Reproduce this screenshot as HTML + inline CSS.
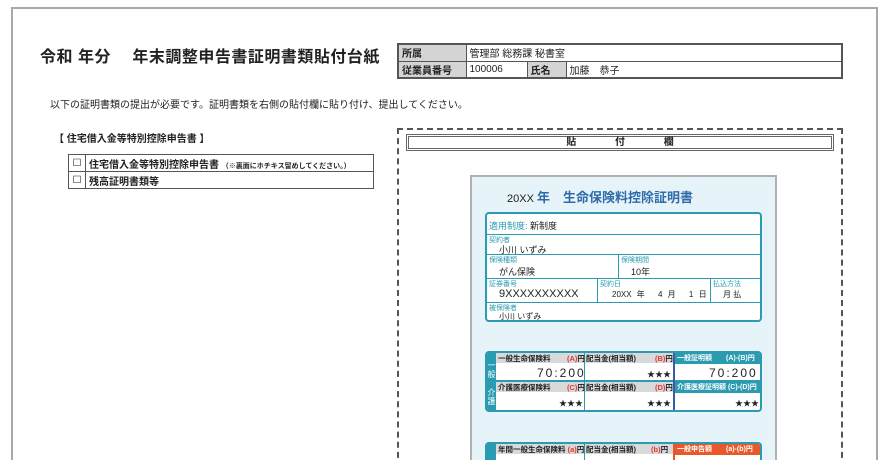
<!DOCTYPE html>
<html style="width:882px;height:474px;overflow:hidden"><head><meta charset="utf-8"><style>
*{margin:0;padding:0;box-sizing:border-box}
body{width:882px;height:474px;background:#fff;position:relative;overflow:hidden;font-family:"Liberation Sans","Noto Sans CJK JP",sans-serif;color:#222}
.a{position:absolute}
.b{font-weight:bold}
table{border-collapse:collapse;position:absolute;table-layout:fixed}
td{border:1px solid #555;font-size:10px;padding:0 3px;height:17px;white-space:nowrap;overflow:hidden}
.g{background:#d4d4d4}
.t{color:#2a9bb0}
.hd{background:#d8d9da;font-size:9px;font-weight:bold;height:10px;position:absolute}
.r{color:#e23b2e}
</style></head><body>
<div class="a" style="left:11px;top:7px;width:867px;height:453px;border:2px solid #a8a8a8;border-bottom:none"></div>
<div class="a b" style="left:40px;top:43px;font-size:16px;letter-spacing:0.5px">令和 年分　 年末調整申告書証明書類貼付台紙</div>
<table style="left:397px;top:43px;width:446px;border:2px solid #555">
<col style="width:68px"><col style="width:61px"><col style="width:39px"><col>
<tr><td class="g b">所属</td><td colspan="3">管理部 総務課 秘書室</td></tr>
<tr><td class="g b">従業員番号</td><td>100006</td><td class="g b">氏名</td><td>加藤　恭子</td></tr>
</table>
<div class="a" style="left:50px;top:96px;font-size:10px">以下の証明書類の提出が必要です。証明書類を右側の貼付欄に貼り付け、提出してください。</div>
<div class="a b" style="left:54px;top:130px;font-size:10px">【 住宅借入金等特別控除申告書 】</div>
<table style="left:68px;top:154px;width:306px">
<col style="width:17px"><col>
<tr><td style="text-align:center;padding:0">☐</td><td class="b">住宅借入金等特別控除申告書 <span style="font-size:7px">（※裏面にホチキス留めしてください。）</span></td></tr>
<tr><td style="text-align:center;padding:0">☐</td><td class="b">残高証明書類等</td></tr>
</table>
<div class="a" style="left:397px;top:128px;width:446px;height:340px;border:2px dashed #555"></div>
<div class="a b" style="left:406px;top:134px;width:428px;height:17px;border:3px double #666;font-size:10px;text-align:center;line-height:11px;word-spacing:36px">貼 付 欄</div>
<div class="a" style="left:470px;top:175px;width:307px;height:295px;background:#e6f4f9;border:2px solid #b0b0b0"></div>
<div class="a" style="left:507px;top:187px;font-size:11px">20XX <span class="b" style="color:#2e6aa8;font-size:13px">年　生命保険料控除証明書</span></div>
<div class="a" style="left:485px;top:212px;width:277px;height:110px;background:#fff;border:2px solid #2a9bb0;border-radius:4px;font-size:9px">
 <div class="a" style="left:0;top:20px;width:273px;border-top:1px solid #2a9bb0"></div>
 <div class="a" style="left:0;top:40px;width:273px;border-top:1px solid #2a9bb0"></div>
 <div class="a" style="left:0;top:64px;width:273px;border-top:1px solid #2a9bb0"></div>
 <div class="a" style="left:0;top:88px;width:273px;border-top:1px solid #2a9bb0"></div>
 <div class="a" style="left:131px;top:40px;height:24px;border-left:1px solid #2a9bb0"></div>
 <div class="a" style="left:110px;top:64px;height:24px;border-left:1px solid #2a9bb0"></div>
 <div class="a" style="left:223px;top:64px;height:24px;border-left:1px solid #2a9bb0"></div>
 <div class="a" style="left:2px;top:5px"><span class="t">適用制度:</span> 新制度</div>
 <div class="a t" style="left:2px;top:21px;font-size:7px">契約者</div><div class="a" style="left:12px;top:29px">小川 いずみ</div>
 <div class="a t" style="left:2px;top:41px;font-size:7px">保険種類</div><div class="a" style="left:12px;top:51px">がん保険</div>
 <div class="a t" style="left:134px;top:41px;font-size:7px">保険期間</div><div class="a" style="left:144px;top:51px">10年</div>
 <div class="a t" style="left:2px;top:65px;font-size:7px">証券番号</div><div class="a" style="left:12px;top:74px;font-size:11px">9XXXXXXXXXX</div>
 <div class="a t" style="left:113px;top:65px;font-size:7px">契約日</div><div class="a" style="left:125px;top:75px;font-size:8px;word-spacing:3px">20XX 年 　4 月 　1 日</div>
 <div class="a t" style="left:226px;top:65px;font-size:7px">払込方法</div><div class="a" style="left:236px;top:75px;font-size:8px">月 払</div>
 <div class="a t" style="left:2px;top:89px;font-size:7px">被保険者</div><div class="a" style="left:12px;top:97px;font-size:8px">小川 いずみ</div>
</div>
<div class="a" style="left:485px;top:351px;width:277px;height:61px;background:#fff;border:2px solid #2a9bb0;border-radius:4px;overflow:hidden;font-size:8px">
 <div class="a" style="left:0;top:0;width:9px;height:61px;background:#2a9bb0;color:#fff;font-size:8px;line-height:9px;text-align:center;padding-top:8px">一<br>般<br><br>介<br>護</div>
 <div class="hd" style="left:9px;top:0;width:177px"></div>
 <div class="hd" style="left:9px;top:29px;width:177px"></div>
 <div class="a" style="left:9px;top:27px;width:264px;border-top:2px solid #2a9bb0"></div>
 <div class="a" style="left:97px;top:0;height:61px;border-left:1px solid #2a9bb0"></div>
 <div class="a" style="left:186px;top:-2px;width:91px;height:61px;border:2px solid #3a5ea6;border-radius:0 4px 4px 0"></div>
 <div class="a" style="left:188px;top:0;width:85px;height:11px;background:#2a9bb0"></div>
 <div class="a" style="left:188px;top:29px;width:85px;height:11px;background:#2a9bb0"></div>
 <div class="a b" style="left:11px;top:0;font-size:7.5px">一般生命保険料</div><div class="a b" style="left:80px;top:0;font-size:7.5px"><span class="r">(A)</span>円</div>
 <div class="a b" style="left:99px;top:0;font-size:7.5px">配当金(相当額)</div><div class="a b" style="left:168px;top:0;font-size:7.5px"><span class="r">(B)</span>円</div>
 <div class="a b" style="left:190px;top:0;font-size:7px;color:#fff;white-space:nowrap">一般証明額　　(A)-(B)円</div>
 <div class="a b" style="left:11px;top:29px;font-size:7.5px">介護医療保険料</div><div class="a b" style="left:80px;top:29px;font-size:7.5px"><span class="r">(C)</span>円</div>
 <div class="a b" style="left:99px;top:29px;font-size:7.5px">配当金(相当額)</div><div class="a b" style="left:168px;top:29px;font-size:7.5px"><span class="r">(D)</span>円</div>
 <div class="a b" style="left:190px;top:29px;font-size:7px;color:#fff;white-space:nowrap">介護医療証明額 (C)-(D)円</div>
 <div class="a" style="left:50px;top:13px;font-size:12px;letter-spacing:2px">70:200</div>
 <div class="a" style="left:222px;top:13px;font-size:12px;letter-spacing:2px">70:200</div>
 <div class="a" style="left:160px;top:16px;font-size:8px">★★★</div>
 <div class="a" style="left:72px;top:45px;font-size:8px">★★★</div>
 <div class="a" style="left:160px;top:45px;font-size:8px">★★★</div>
 <div class="a" style="left:248px;top:45px;font-size:8px">★★★</div>
</div>
<div class="a" style="left:485px;top:442px;width:277px;height:26px;background:#fff;border:2px solid #2a9bb0;border-bottom:none;border-radius:4px 4px 0 0;overflow:hidden;font-size:7.5px">
 <div class="a" style="left:0;top:0;width:9px;height:30px;background:#2a9bb0"></div>
 <div class="hd" style="left:9px;top:0;width:177px"></div>
 <div class="a" style="left:97px;top:0;height:30px;border-left:1px solid #2a9bb0"></div>
 <div class="a" style="left:186px;top:-2px;width:91px;height:34px;border:2px solid #e8582a"></div>
 <div class="a" style="left:188px;top:0;width:85px;height:11px;background:#e8582a"></div>
 <div class="a b" style="left:11px;top:0;white-space:nowrap">年間一般生命保険料 <span class="r">(a)</span>円</div>
 <div class="a b" style="left:99px;top:0;white-space:nowrap">配当金(相当額)　　<span class="r">(b)</span>円</div>
 <div class="a b" style="left:190px;top:0;color:#fff;font-size:7px;white-space:nowrap">一般申告額　　(a)-(b)円</div>
</div>
<div class="a" style="left:0;top:460px;width:882px;height:14px;background:#fff"></div>
</body></html>
